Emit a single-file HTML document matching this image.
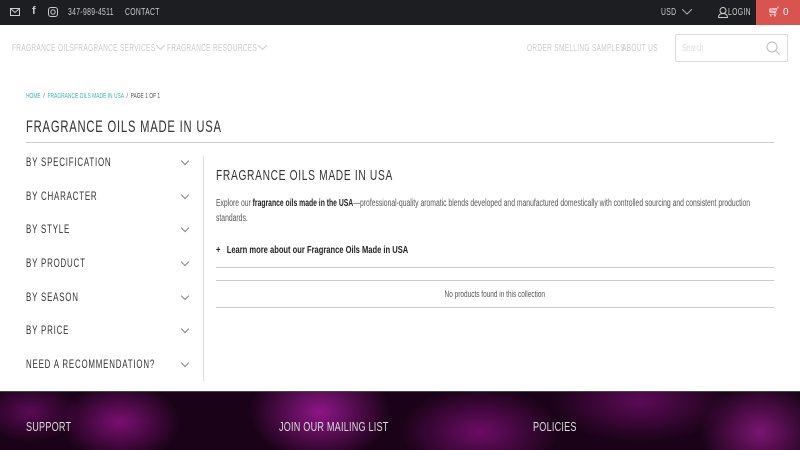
<!DOCTYPE html>
<html><head><meta charset="utf-8"><style>
*{margin:0;padding:0;box-sizing:border-box}
body{width:800px;height:450px;overflow:hidden;background:#fff;font-family:"Liberation Sans",sans-serif;color:#333;position:relative}
.c{display:inline-block;transform:scaleX(.68);transform-origin:0 0;white-space:nowrap}
.top{position:absolute;left:0;top:0;width:800px;height:25px;background:#1c1e22;color:#ccc;font-size:10px}
.top span{position:absolute;top:7px;letter-spacing:.5px;transform:scaleX(.68);transform-origin:0 0;white-space:nowrap}
.cart{position:absolute;right:0;top:0;width:44px;height:25px;background:#d9534f;color:#fff;font-size:10px;text-align:center;line-height:25px}
.nav{position:absolute;top:43px;font-size:10.2px;color:#ccc;letter-spacing:.5px;transform:scaleX(.64);transform-origin:0 0;white-space:nowrap}
.search{position:absolute;left:675px;top:34px;width:113px;height:28px;border:1px solid #ddd;font-size:10px;color:#ddd;padding:8px 6px}
.crumb{position:absolute;left:26px;top:93px;font-size:7px;color:#555;transform:scaleX(.7);transform-origin:0 0;white-space:nowrap}
.crumb a{color:#3ab7b0}
h1{position:absolute;left:26px;top:117px;font-weight:normal;font-size:17px;letter-spacing:1.2px;color:#333;transform:scaleX(.66);transform-origin:0 0;white-space:nowrap}
.hr{position:absolute;left:26px;top:142px;width:748px;height:1px;background:#ccc}
.side{position:absolute;left:26px;top:150px;width:178px}
.side div{height:33.7px;font-size:12px;letter-spacing:1.2px;line-height:25px;position:relative;color:#333}
.side div span{display:inline-block;transform:scaleX(.66);transform-origin:0 0;white-space:nowrap}
.side div:after{content:"";position:absolute;right:16px;top:8px;width:5px;height:5px;border-right:1px solid #888;border-bottom:1px solid #888;transform:rotate(45deg)}
.vline{position:absolute;left:203px;top:156px;width:1px;height:225px;background:#ddd}
h2{position:absolute;left:216px;top:167px;font-weight:normal;font-size:15px;letter-spacing:1px;color:#333;transform:scaleX(.68);transform-origin:0 0;white-space:nowrap}
.p{position:absolute;left:216px;top:196px;width:822px;font-size:10px;line-height:15px;color:#555;transform:scaleX(.68);transform-origin:0 0}
.learn{position:absolute;left:216px;top:244px;font-size:10.5px;font-weight:bold;color:#222;transform:scaleX(.72);transform-origin:0 0;white-space:nowrap}
.l{position:absolute;left:216px;width:558px;height:1px;background:#ccc}
.none{position:absolute;left:216px;top:289px;width:558px;text-align:center;font-size:9px;color:#555}
.none span{display:inline-block;transform:scaleX(.72)}
.foot{position:absolute;left:0;top:391px;width:800px;height:59px;border-top:1px solid #444;background:
radial-gradient(ellipse 60px 40px at 120px 30px,#7a0f72,transparent),
radial-gradient(ellipse 70px 50px at 320px 20px,#8e1687,transparent),
radial-gradient(ellipse 80px 45px at 480px 40px,#6d0c66,transparent),
radial-gradient(ellipse 90px 40px at 640px 10px,#5c0a56,transparent),
radial-gradient(ellipse 60px 50px at 760px 40px,#7a1572,transparent),
radial-gradient(ellipse 50px 30px at 30px 20px,#5a0a54,transparent),#1a0318}
.foot span{position:absolute;top:27px;font-size:13px;color:#ddd;letter-spacing:.3px;transform:scaleX(.7);transform-origin:0 0;white-space:nowrap}
</style></head><body>
<div class="top">
<svg style="position:absolute;left:10px;top:8px" width="10" height="8" viewBox="0 0 10 8"><rect x=".5" y=".5" width="9" height="7" fill="none" stroke="#ccc"/><path d="M.5 .5 5 4.5 9.5 .5" fill="none" stroke="#ccc"/></svg>
<span style="left:32px;top:5px;font-weight:bold;font-size:11px;transform:none">f</span>
<svg style="position:absolute;left:48px;top:7px" width="10" height="10" viewBox="0 0 10 10"><rect x=".5" y=".5" width="9" height="9" rx="2.5" fill="none" stroke="#ccc"/><circle cx="5" cy="5" r="2.2" fill="none" stroke="#ccc"/></svg>
<span style="left:68px">347-989-4511</span><span style="left:125px">CONTACT</span>
<span style="left:661px">USD</span>
<svg style="position:absolute;left:682px;top:9px" width="10" height="6"><path d="M0 0 5 5 10 0" fill="none" stroke="#aaa"/></svg>
<svg style="position:absolute;left:718px;top:7px" width="10" height="11" viewBox="0 0 10 11"><circle cx="5" cy="3.5" r="3" fill="none" stroke="#ccc"/><path d="M.5 10.5c0-3 2-4 4.5-4s4.5 1 4.5 4z" fill="none" stroke="#ccc"/></svg>
<span style="left:728px">LOGIN</span>
<div class="cart">&#128722;&#xFE0E; 0</div>
</div>
<span class="nav" style="left:12px">FRAGRANCE OILS</span>
<span class="nav" style="left:74px">FRAGRANCE SERVICES</span>
<svg style="position:absolute;left:156px;top:45px" width="9" height="5"><path d="M0 0 4.5 4.5 9 0" fill="none" stroke="#ccc"/></svg>
<span class="nav" style="left:167px">FRAGRANCE RESOURCES</span>
<svg style="position:absolute;left:258px;top:45px" width="9" height="5"><path d="M0 0 4.5 4.5 9 0" fill="none" stroke="#ccc"/></svg>
<span class="nav" style="left:527px">ORDER SMELLING SAMPLES</span>
<span class="nav" style="left:622px">ABOUT US</span>
<div class="search"><span class="c">Search</span>
<svg style="position:absolute;right:7px;top:6px" width="14" height="14"><circle cx="6" cy="6" r="5" fill="none" stroke="#bbb"/><path d="M9.5 9.5 13.5 13.5" stroke="#bbb"/></svg></div>
<div class="crumb"><a>HOME</a> &nbsp;/&nbsp; <a>FRAGRANCE OILS MADE IN USA</a> &nbsp;/&nbsp; PAGE 1 OF 1</div>
<h1>FRAGRANCE OILS MADE IN USA</h1>
<div class="hr"></div>
<div class="side"><div><span>BY SPECIFICATION</span></div><div><span>BY CHARACTER</span></div><div><span>BY STYLE</span></div><div><span>BY PRODUCT</span></div><div><span>BY SEASON</span></div><div><span>BY PRICE</span></div><div><span>NEED A RECOMMENDATION?</span></div></div>
<div class="vline"></div>
<h2>FRAGRANCE OILS MADE IN USA</h2>
<div class="p">Explore our <b style="color:#222">fragrance oils made in the USA</b>—professional-quality aromatic blends developed and manufactured domestically with controlled sourcing and consistent production standards.</div>
<div class="learn">+ &nbsp;&nbsp;Learn more about our Fragrance Oils Made in USA</div>
<div class="l" style="top:267px"></div><div class="l" style="top:280px"></div>
<div class="none"><span>No products found in this collection</span></div>
<div class="l" style="top:307px"></div>
<div class="foot"><span style="left:26px">SUPPORT</span><span style="left:279px">JOIN OUR MAILING LIST</span><span style="left:533px">POLICIES</span></div>
</body></html>
